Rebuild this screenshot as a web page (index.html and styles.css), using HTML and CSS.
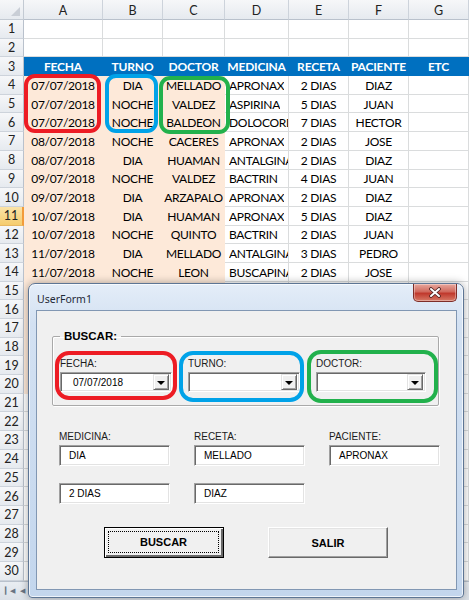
FILE: index.html
```html
<!DOCTYPE html>
<html lang="es">
<head>
    <meta charset="UTF-8">
    <title>UserForm1 - Buscar</title>
    <link rel="stylesheet" href="styles.css">
</head>
<body>
    <div class="sheet" id="sheet">
        <div class="corner"></div>
        <div class="col-head">A</div>
        <div class="col-head">B</div>
        <div class="col-head">C</div>
        <div class="col-head">D</div>
        <div class="col-head">E</div>
        <div class="col-head">F</div>
        <div class="col-head">G</div>
        <div class="mark mark-fecha"></div>
        <div class="mark mark-turno"></div>
        <div class="mark mark-doctor"></div>
    </div>
    <div class="tabs">
        <span class="nav">&#9614;&#9664;</span>
        <span class="nav">&#9664;</span>
    </div>

    <div class="window">
        <div class="titlebar">
            <span class="title">UserForm1</span>
            <button class="close">
                <svg width="14" height="11" viewBox="0 0 14 11">
                    <path d="M3 2 L11 9 M11 2 L3 9" stroke="#4a2020" stroke-width="3.6" stroke-linecap="round"/>
                    <path d="M3 2 L11 9 M11 2 L3 9" stroke="#fff" stroke-width="2" stroke-linecap="round"/>
                </svg>
            </button>
        </div>
        <div class="client">
            <fieldset class="frame">
                <legend>BUSCAR:</legend>
                <div class="group">
                    <label>FECHA:</label>
                    <div class="combo"><span>07/07/2018</span><i class="drop"></i></div>
                    <div class="ring ring-red"></div>
                </div>
                <div class="group">
                    <label>TURNO:</label>
                    <div class="combo"><span></span><i class="drop"></i></div>
                    <div class="ring ring-blue"></div>
                </div>
                <div class="group group-narrow">
                    <label>DOCTOR:</label>
                    <div class="combo"><span></span><i class="drop"></i></div>
                    <div class="ring ring-green"></div>
                </div>
            </fieldset>

            <div class="fields">
                <div class="field"><label>MEDICINA:</label><div class="textbox">DIA</div></div>
                <div class="field"><label>RECETA:</label><div class="textbox">MELLADO</div></div>
                <div class="field"><label>PACIENTE:</label><div class="textbox">APRONAX</div></div>
                <div class="textbox">2 DIAS</div>
                <div class="textbox">DIAZ</div>
            </div>

            <div class="buttons">
                <button class="btn btn-default"><span>BUSCAR</span></button>
                <button class="btn"><span>SALIR</span></button>
            </div>
        </div>
    </div>

    <script>
        const rows = {
            3: ['FECHA', 'TURNO', 'DOCTOR', 'MEDICINA', 'RECETA', 'PACIENTE', 'ETC'],
            4: ['07/07/2018', 'DIA', 'MELLADO', 'APRONAX', '2 DIAS', 'DIAZ', ''],
            5: ['07/07/2018', 'NOCHE', 'VALDEZ', 'ASPIRINA', '5 DIAS', 'JUAN', ''],
            6: ['07/07/2018', 'NOCHE', 'BALDEON', 'DOLOCORDRALAN', '7 DIAS', 'HECTOR', ''],
            7: ['08/07/2018', 'NOCHE', 'CACERES', 'APRONAX', '2 DIAS', 'JOSE', ''],
            8: ['08/07/2018', 'DIA', 'HUAMAN', 'ANTALGINA', '2 DIAS', 'DIAZ', ''],
            9: ['09/07/2018', 'NOCHE', 'VALDEZ', 'BACTRIN', '4 DIAS', 'JUAN', ''],
            10: ['09/07/2018', 'DIA', 'ARZAPALO', 'APRONAX', '2 DIAS', 'DIAZ', ''],
            11: ['10/07/2018', 'DIA', 'HUAMAN', 'APRONAX', '5 DIAS', 'DIAZ', ''],
            12: ['10/07/2018', 'NOCHE', 'QUINTO', 'BACTRIN', '2 DIAS', 'JUAN', ''],
            13: ['11/07/2018', 'DIA', 'MELLADO', 'ANTALGINA', '3 DIAS', 'PEDRO', ''],
            14: ['11/07/2018', 'NOCHE', 'LEON', 'BUSCAPINA', '2 DIAS', 'JOSE', '']
        };
        const selectedRow = 11;

        function cellClass(r, c) {
            if (r === 3) return 'cell head-row';
            let cls = 'cell';
            if (r >= 4 && r <= 20 && c < 3) cls += ' fill';
            if (r > 3 && c === 3) cls += ' left';
            return cls;
        }

        let html = '';
        for (let r = 1; r <= 30; r++) {
            const values = rows[r] || ['', '', '', '', '', '', ''];
            html += `<div class="row-head${r === selectedRow ? ' sel' : ''}">${r}</div>`;
            html += values.map((v, c) => `<div class="${cellClass(r, c)}"><span>${v}</span></div>`).join('');
        }
        document.getElementById('sheet').insertAdjacentHTML('beforeend', html);
    </script>
</body>
</html>
```

FILE: styles.css
```css
* {
    box-sizing: border-box;
}

body {
    margin: 0;
    width: 469px;
    height: 600px;
    overflow: hidden;
    position: relative;
    background: #fff;
    font-family: Lato, "Liberation Sans", sans-serif;
}

/* hoja de calculo */
.sheet {
    position: relative;
    display: grid;
    grid-template-columns: 24px 79px 60px 62px 64px 60px 60px 60px;
    grid-template-rows: 20px;
    grid-auto-rows: 18.7px;
}

.corner,
.col-head,
.row-head {
    background: linear-gradient(#f6f7f9, #e6eaef);
    color: #222;
    font-size: 12.5px;
    display: flex;
    align-items: center;
    justify-content: center;
}

.corner {
    border-right: 1px solid #c3cad3;
    border-bottom: 1px solid #c3cad3;
    position: relative;
}

.corner::after {
    content: '';
    position: absolute;
    right: 3px;
    bottom: 3px;
    border-left: 9px solid transparent;
    border-bottom: 9px solid #c9ced6;
}

.col-head {
    border-right: 1px solid #cdd3db;
    border-bottom: 1px solid #b9c1cc;
    padding-top: 1px;
}

.row-head {
    border-right: 1px solid #b9c1cc;
    border-bottom: 1px solid #cdd3db;
}

.row-head.sel {
    background: linear-gradient(#fbe3a8, #f5cc6e);
    border-right: 2px solid #f29b3a;
    border-bottom-color: #e7b864;
}

.cell {
    border-right: 1px solid #dadcdd;
    border-bottom: 1px solid #dadcdd;
    font-size: 12px;
    letter-spacing: -0.3px;
    color: #000;
    display: flex;
    align-items: center;
    justify-content: center;
    overflow: hidden;
    white-space: nowrap;
    padding-top: 1px;
}

.cell.left {
    justify-content: flex-start;
    padding-left: 4px;
}

.cell.left span {
    min-width: 0;
    overflow: hidden;
}

.cell.fill {
    background: #fde9d9;
    border-color: #fde9d9;
}

.cell.head-row {
    background: #0070c0;
    border-color: #0070c0;
    color: #fff;
    font-weight: 700;
    letter-spacing: -0.2px;
}

.mark {
    position: absolute;
    border: 4px solid;
    border-radius: 11px;
}

.mark-fecha {
    left: 24px;
    top: 74px;
    width: 77px;
    height: 59px;
    border-color: #ed1c24;
}

.mark-turno {
    left: 105px;
    top: 74px;
    width: 53px;
    height: 59px;
    border-color: #00a2e8;
}

.mark-doctor {
    left: 159px;
    top: 76px;
    width: 71px;
    height: 58px;
    border-color: #22b14c;
}

.tabs {
    height: 19px;
    background: linear-gradient(#e9edf2, #dbe1e8);
    border-top: 1px solid #b9c1cc;
    display: flex;
    align-items: center;
    gap: 5px;
    padding-left: 5px;
}

.nav {
    font-size: 7px;
    color: #6a7584;
}

/* formulario */
.window {
    position: absolute;
    left: 28px;
    top: 283px;
    width: 436px;
    height: 315px;
    display: flex;
    flex-direction: column;
    background: linear-gradient(#e4edf8, #d3e1f2 40px, #c3d6ed);
    border: 1px solid #5d7594;
    border-radius: 7px 7px 4px 4px;
    box-shadow: inset 0 0 0 1px rgba(255, 255, 255, 0.7), 0 0 8px rgba(0, 0, 0, 0.35);
    font-family: "Liberation Sans", Arial, sans-serif;
}

.titlebar {
    height: 26px;
    display: flex;
    justify-content: space-between;
    align-items: flex-start;
    padding: 0 6px 0 8px;
}

.title {
    font-family: "Noto Sans", "Liberation Sans", sans-serif;
    font-size: 10.5px;
    color: #1e2a38;
    margin-top: 8px;
}

.close {
    width: 44px;
    height: 18px;
    margin: 0;
    padding: 0;
    border: 1px solid #7d2d28;
    border-top: none;
    border-radius: 0 0 5px 5px;
    background: linear-gradient(#e8a89e, #d0695d 45%, #c0392d 55%, #d77a66);
    box-shadow: inset 0 0 0 1px rgba(255, 255, 255, 0.35);
    display: flex;
    align-items: center;
    justify-content: center;
}

.client {
    flex: 1;
    margin: 0 6px 7px 7px;
    background: #f0f0f0;
    border: 1px solid #8197b3;
    font-size: 10px;
    color: #000;
}

.frame {
    margin: 19px 0 0 15px;
    width: 387px;
    padding: 16px 0 13px 7px;
    border: 1px solid #a9a9a9;
    border-radius: 2px;
    box-shadow: 1px 1px 0 #fff, inset 1px 1px 0 #fff;
    display: flex;
    gap: 16px;
}

.frame legend {
    padding: 0 4px;
    font-size: 11.5px;
    font-weight: 700;
}

.group {
    position: relative;
    width: 112px;
}

.group-narrow {
    width: 110px;
}

label {
    display: block;
    height: 12px;
    line-height: 12px;
    margin-bottom: 2px;
    color: #1b1b1b;
}

.combo,
.textbox {
    background: #fff;
    border: 1px solid;
    border-color: #a0a0a0 #fff #fff #a0a0a0;
    box-shadow: inset 1px 1px 0 #696969, inset -1px -1px 0 #e3e3e3;
    display: flex;
    align-items: center;
}

.combo {
    height: 20px;
    padding: 0 2px 0 12px;
}

.combo span {
    flex: 1;
}

.drop {
    width: 16px;
    height: 16px;
    background: #f0f0f0;
    border: 1px solid;
    border-color: #e3e3e3 #696969 #696969 #e3e3e3;
    box-shadow: inset 1px 1px 0 #fff, inset -1px -1px 0 #a0a0a0;
    display: flex;
    align-items: center;
    justify-content: center;
}

.drop::after {
    content: '';
    border-left: 4px solid transparent;
    border-right: 4px solid transparent;
    border-top: 4px solid #000;
    margin-top: 1px;
}

.ring {
    position: absolute;
    border: 4px solid;
    border-radius: 14px;
}

.ring-red {
    left: -5px;
    right: -5px;
    top: -7px;
    bottom: -8px;
    border-color: #ed1c24;
}

.ring-blue {
    left: -9px;
    right: -4px;
    top: -7px;
    bottom: -10px;
    border-color: #00a2e8;
}

.ring-green {
    left: -9px;
    right: -12px;
    top: -8px;
    bottom: -11px;
    border-color: #22b14c;
}

.fields {
    display: grid;
    grid-template-columns: repeat(3, 111px);
    column-gap: 24px;
    row-gap: 17px;
    margin: 25px 0 0 22px;
}

.textbox {
    height: 21px;
    padding-left: 9px;
}

.buttons {
    display: flex;
    gap: 44px;
    margin: 23px 0 0 67px;
}

.btn {
    width: 120px;
    height: 31px;
    padding: 0;
    background: #f0f0f0;
    border: 1px solid;
    border-color: #fff #696969 #696969 #fff;
    box-shadow: inset -1px -1px 0 #a0a0a0, inset 1px 1px 0 #e3e3e3;
    font-family: "Liberation Sans", Arial, sans-serif;
    font-size: 11px;
    font-weight: 700;
    color: #000;
}

.btn-default {
    border: 1px solid #000;
    box-shadow: inset 1px 1px 0 #fff, inset -2px -2px 0 #696969;
    padding: 3px 4px 4px 3px;
}

.btn-default span {
    display: flex;
    align-items: center;
    justify-content: center;
    height: 100%;
    border: 1px dotted #000;
}
```
